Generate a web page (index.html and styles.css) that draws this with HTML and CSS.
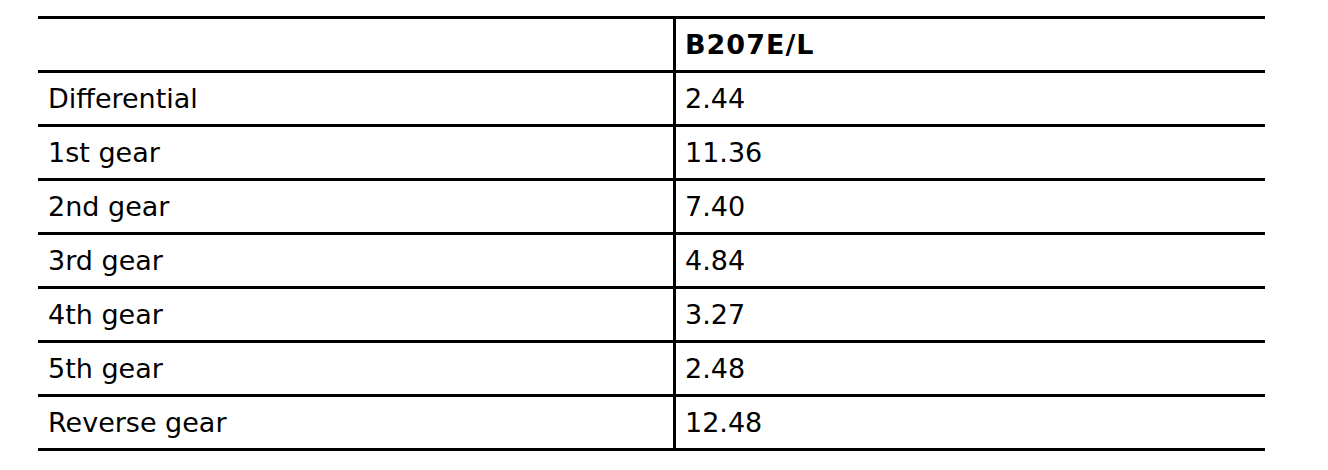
FILE: index.html
```html
<!DOCTYPE html>
<html lang="en">
<head>
  <meta charset="UTF-8" />
  <title>Gear ratios - B207E/L</title>
  <link rel="stylesheet" href="styles.css">
</head>
<body>

<!-- Gear ratio table -->
<table class="ratio-table">
  <thead>
    <tr>
      <th class="label"></th>
      <th class="value">B207E/L</th>
    </tr>
  </thead>
  <tbody>
    <tr><td class="label">Differential</td><td class="value">2.44</td></tr>
    <tr><td class="label">1st gear</td><td class="value">11.36</td></tr>
    <tr><td class="label">2nd gear</td><td class="value">7.40</td></tr>
    <tr><td class="label">3rd gear</td><td class="value">4.84</td></tr>
    <tr><td class="label">4th gear</td><td class="value">3.27</td></tr>
    <tr><td class="label">5th gear</td><td class="value">2.48</td></tr>
    <tr><td class="label">Reverse gear</td><td class="value">12.48</td></tr>
  </tbody>
</table>

</body>
</html>
```

FILE: styles.css
```css
body {
  margin: 0;
  padding: 16px 0 0 38px;
  background: #fff;
  color: #000;
  font-family: 'DejaVu Sans', Verdana, sans-serif;
}

.ratio-table {
  width: 1227px;
  table-layout: fixed;
  border-collapse: separate;
  border-spacing: 0;
  border-top: 3px solid #000;
  font-size: 27px;
}

.ratio-table th,
.ratio-table td {
  padding: 0 10px;
  height: 51px;
  line-height: 51px;
  text-align: left;
  vertical-align: middle;
  border-bottom: 3px solid #000;
  white-space: nowrap;
}

.ratio-table .label {
  width: 615px;
}

.ratio-table .value {
  border-left: 3px solid #000;
  padding-left: 9px;
}

.ratio-table th {
  font-weight: bold;
  letter-spacing: 1px;
}
```
